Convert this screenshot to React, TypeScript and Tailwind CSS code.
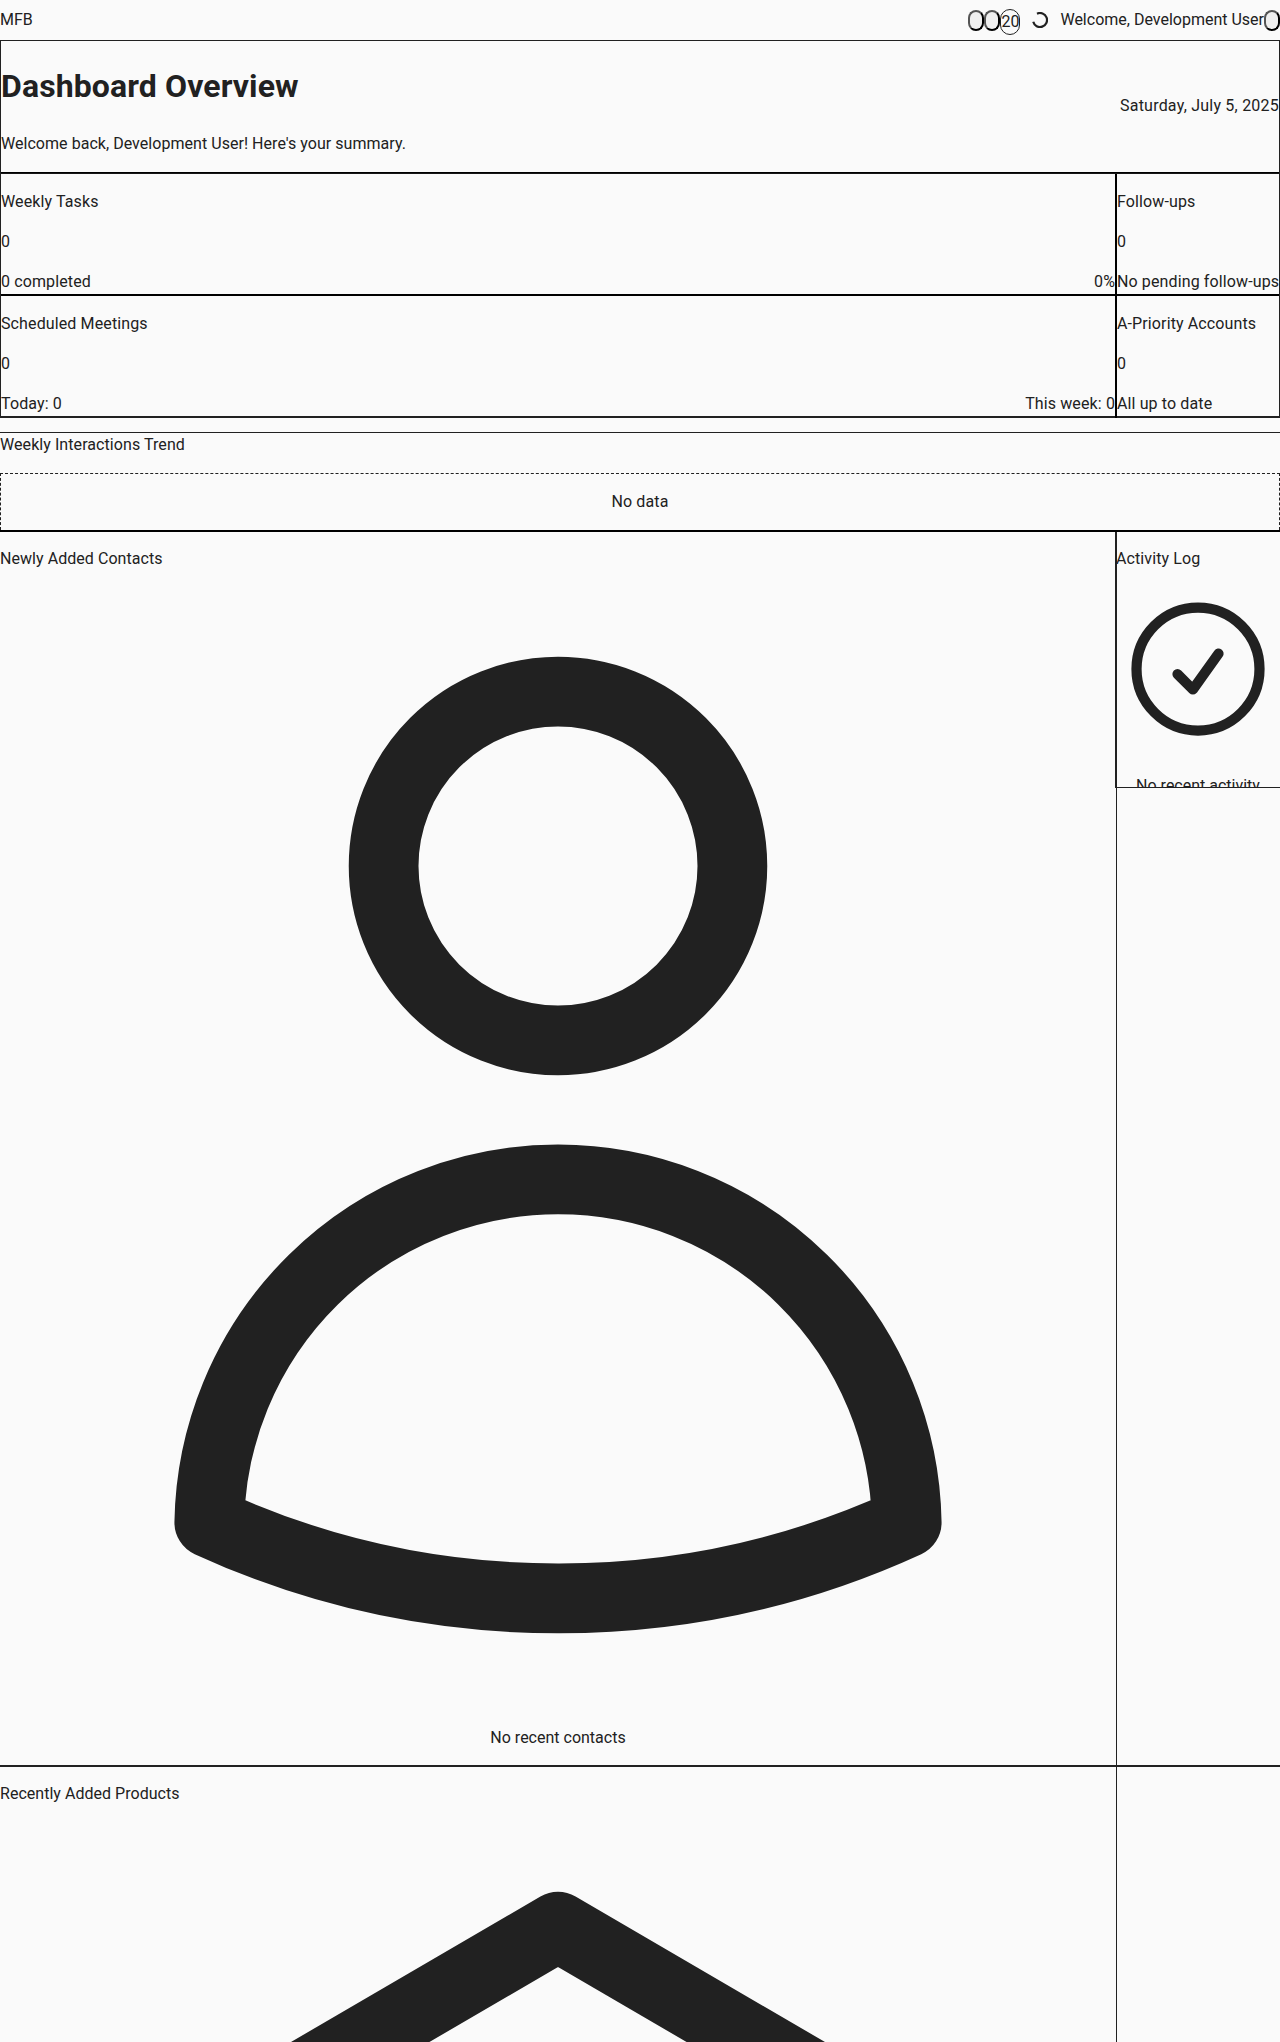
function Card({ title, left, right }: { title: string; left: string; right?: string }) {
  return (
    <div className="flex h-[120px] flex-col gap-4 whitespace-nowrap pt-4 leading-6 tracking-[0.12px]">
      <p>{title}</p>
      <p>0</p>
      <div className="flex justify-between">
        <span>{left}</span>
        {right && <span>{right}</span>}
      </div>
    </div>
  );
}

function Icon({ d, className }: { d: string; className: string }) {
  return (
    <svg
      viewBox="0 0 24 24"
      fill="none"
      stroke="currentColor"
      strokeWidth={1.5}
      strokeLinecap="round"
      strokeLinejoin="round"
      className={`block shrink-0 ${className}`}
    >
      <path d={d} />
    </svg>
  );
}

const USER =
  'M15.75 6a3.75 3.75 0 1 1-7.5 0 3.75 3.75 0 0 1 7.5 0ZM4.501 20.118a7.5 7.5 0 0 1 14.998 0A17.933 17.933 0 0 1 12 21.75c-2.676 0-5.216-.584-7.499-1.632Z';
const CHECK = 'M9 12.75 11.25 15 15 9.75M21 12a9 9 0 1 1-18 0 9 9 0 0 1 18 0Z';
const CUBE = 'm21 7.5-9-5.25L3 7.5m18 0-9 5.25m9-5.25v9l-9 5.25M3 7.5l9 5.25M3 7.5v9l9 5.25m0-9v9';

const PILL = 'block h-[21px] w-4 rounded-full border-2 border-black bg-[#efefef] [border-style:outset]';

export default function App() {
  return (
    <div className="h-[2042px] w-[1280px] overflow-hidden bg-[#fafafa] font-['Roboto',sans-serif] text-base text-[#212121]">
      <header className="flex h-10 items-center justify-between">
        <span>MFB</span>
        <div className="flex items-center">
          <button className={PILL} />
          <button className={PILL} />
          <span className="mt-1 flex h-[26px] w-5 items-center justify-center rounded-full border border-[#212121]">
            20
          </span>
          <svg viewBox="0 0 16 16" className="ml-3 h-4 w-4" fill="none" stroke="currentColor" strokeWidth="2.2">
            <path d="M1.24 9.8A7 7 0 1 0 5 1.7" />
          </svg>
          <span className="ml-3">Welcome, Development User</span>
          <button className={PILL} />
        </div>
      </header>

      <div className="border-x border-t border-[#212121]">
        <section className="flex h-[131px] items-start justify-between">
          <div className="pt-[21px]">
            <h1 className="text-[32px] font-bold leading-[48px] tracking-[0.11px]">Dashboard Overview</h1>
            <p className="mt-[22px] leading-6 tracking-[0.04px]">
              Welcome back, Development User! Here's your summary.
            </p>
          </div>
          <p className="mt-[53px] leading-6 tracking-[0.22px]">Saturday, July 5, 2025</p>
        </section>
        <div className="h-px bg-black" />
        <div className="h-px bg-[#171717]" />
        <section className="grid grid-cols-[1114px_2px_162px]">
          <Card title="Weekly Tasks" left="0 completed" right="0%" />
          <div className="bg-black" />
          <Card title="Follow-ups" left="No pending follow-ups" />
          <div className="col-span-3 h-[2px] bg-black" />
          <Card title="Scheduled Meetings" left="Today: 0" right="This week: 0" />
          <div className="bg-black" />
          <Card title="A-Priority Accounts" left="All up to date" />
          <div className="h-[2px] bg-[#212121]" />
          <div className="bg-black" />
          <div className="bg-[#212121]" />
        </section>
      </div>

      <section className="mt-[14px] border-t border-[#212121]">
        <p className="leading-6 tracking-[0.07px]">Weekly Interactions Trend</p>
        <div className="mt-4 border-x border-t border-dashed border-[#212121] py-4 text-center leading-6 tracking-[0.12px]">
          No data
        </div>
        <div className="h-[2px] bg-black" />
      </section>

      <div className="flex h-[1233px] items-start">
        <section className="h-full w-[1117px] shrink-0 border-r border-[#212121] pt-[15px]">
          <p className="leading-6 tracking-[0.05px]">Newly Added Contacts</p>
          <Icon d={USER} className="mt-[15.5px] h-[1116px] w-[1116px]" />
          <p className="mt-[23.5px] text-center leading-6">No recent contacts</p>
        </section>
        <section className="-ml-[2px] h-64 w-[165px] overflow-hidden border-b border-l border-[#212121] pt-[15px]">
          <p className="leading-6 tracking-[0.1px]">Activity Log</p>
          <Icon d={CHECK} className="mt-4 h-[164px] w-[164px]" />
          <p className="mt-[23px] text-center leading-6">No recent activity</p>
        </section>
      </div>
      <div className="h-[2px] bg-[#212121]" />
      <section className="w-[1117px] border-r border-[#212121] pt-[15px]">
        <p className="leading-6 tracking-[0.03px]">Recently Added Products</p>
        <Icon d={CUBE} className="mt-[15.5px] h-[1116px] w-[1116px]" />
      </section>
    </div>
  );
}
